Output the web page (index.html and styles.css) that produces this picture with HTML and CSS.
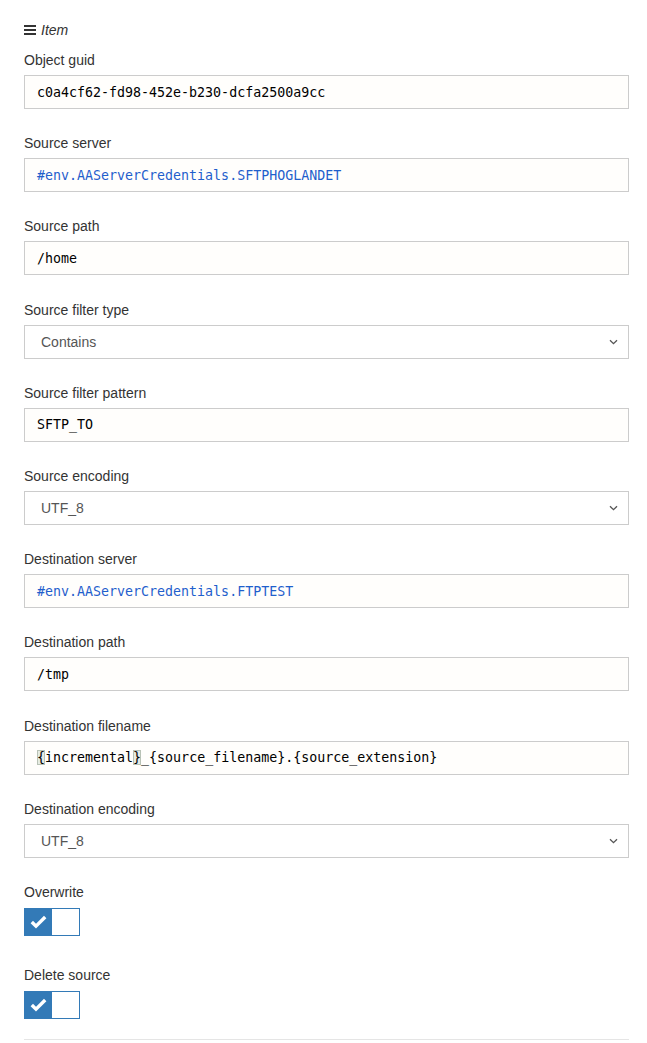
FILE: index.html
```html
<!DOCTYPE html>
<html>
<head>
<meta charset="utf-8">
<link rel="stylesheet" href="styles.css">
</head>
<body>
<div class="page">
  <div class="head">
    <svg class="burger" width="12" height="10" viewBox="0 0 12 10"><rect x="0" y="0" width="12" height="2" fill="#333"/><rect x="0" y="4" width="12" height="2" fill="#333"/><rect x="0" y="8" width="12" height="2" fill="#333"/></svg>
    <span class="title">Item</span>
  </div>

  <div class="field">
    <div class="label">Object guid</div>
    <div class="input">c0a4cf62-fd98-452e-b230-dcfa2500a9cc</div>
  </div>
  <div class="field">
    <div class="label">Source server</div>
    <div class="input var">#env.AAServerCredentials.SFTPHOGLANDET</div>
  </div>
  <div class="field">
    <div class="label">Source path</div>
    <div class="input">/home</div>
  </div>
  <div class="field">
    <div class="label">Source filter type</div>
    <div class="select"><span>Contains</span><svg class="chev" width="9" height="6" viewBox="0 0 9 6"><path d="M1 1.2l3.5 3.5 3.5-3.5" fill="none" stroke="#555" stroke-width="1.3"/></svg></div>
  </div>
  <div class="field">
    <div class="label">Source filter pattern</div>
    <div class="input">SFTP_TO</div>
  </div>
  <div class="field">
    <div class="label">Source encoding</div>
    <div class="select"><span>UTF_8</span><svg class="chev" width="9" height="6" viewBox="0 0 9 6"><path d="M1 1.2l3.5 3.5 3.5-3.5" fill="none" stroke="#555" stroke-width="1.3"/></svg></div>
  </div>
  <div class="field">
    <div class="label">Destination server</div>
    <div class="input var">#env.AAServerCredentials.FTPTEST</div>
  </div>
  <div class="field">
    <div class="label">Destination path</div>
    <div class="input">/tmp</div>
  </div>
  <div class="field">
    <div class="label">Destination filename</div>
    <div class="input"><span class="match">{</span>incremental<span class="match">}</span>_{source_filename}.{source_extension}</div>
  </div>
  <div class="field">
    <div class="label">Destination encoding</div>
    <div class="select"><span>UTF_8</span><svg class="chev" width="9" height="6" viewBox="0 0 9 6"><path d="M1 1.2l3.5 3.5 3.5-3.5" fill="none" stroke="#555" stroke-width="1.3"/></svg></div>
  </div>
  <div class="field">
    <div class="label">Overwrite</div>
    <div class="toggle"><div class="on"><svg width="17" height="14" viewBox="0 0 17 14"><path d="M1.8 7l4.2 4.2 9.2-9.2" fill="none" stroke="#fff" stroke-width="3.4"/></svg></div><div class="off"></div></div>
  </div>
  <div class="field">
    <div class="label">Delete source</div>
    <div class="toggle"><div class="on"><svg width="17" height="14" viewBox="0 0 17 14"><path d="M1.8 7l4.2 4.2 9.2-9.2" fill="none" stroke="#fff" stroke-width="3.4"/></svg></div><div class="off"></div></div>
  </div>
  <div class="rule"></div>
</div>
</body>
</html>
```

FILE: styles.css
```css
html, body {
  margin: 0;
  padding: 0;
  background: #fff;
}
.page {
  padding: 20px 18px 0 24px;
  font-family: "Liberation Sans", Arial, sans-serif;
  color: #333;
}
.head {
  display: flex;
  align-items: center;
  gap: 5px;
  height: 20px;
  font-size: 14px;
}
.title {
  font-style: italic;
}
.field {
  display: flex;
  flex-direction: column;
  margin-top: 10px;
}
.field + .field {
  margin-top: 24.2px;
}
.label {
  font-size: 14px;
  line-height: 20px;
  height: 20px;
}
.input, .select {
  margin-top: 5px;
  box-sizing: border-box;
  height: 34px;
  border: 1px solid #ccc;
  display: flex;
  align-items: center;
}
.input {
  background: #fffefc;
  padding-left: 12px;
  font-family: "DejaVu Sans Mono", "Liberation Mono", monospace;
  font-size: 13.3px;
  color: #000;
  white-space: pre;
}
.input.var {
  color: #1f5fcc;
}
.match {
  background: #e6ebe4;
  outline: 1px solid #b8c2b6;
  outline-offset: -1px;
}
.select {
  background: #fff;
  padding: 0 10px 0 16px;
  justify-content: space-between;
  font-size: 14px;
  color: #555;
}
.toggle {
  margin-top: 6px;
  display: flex;
  width: 56px;
  height: 28px;
  box-sizing: border-box;
  border: 1px solid #337ab7;
  margin-bottom: 5px;
}
.toggle .on {
  width: 27px;
  background: #337ab7;
  display: flex;
  align-items: center;
  justify-content: center;
}
.toggle .off {
  flex: 1;
  background: #fff;
}
.rule {
  margin-top: 15px;
  border-top: 1px solid #e5e5e5;
}
```
